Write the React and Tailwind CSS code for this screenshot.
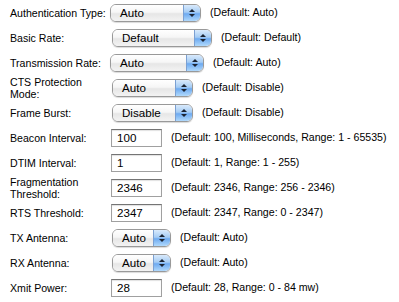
const rows = [
  { label: 'Authentication Type:', kind: 'select', value: 'Auto', w: 'w-[91px]', ml: 'ml-0', note: '(Default: Auto)' },
  { label: 'Basic Rate:', kind: 'select', value: 'Default', w: 'w-[100px]', ml: 'ml-[2px]', note: '(Default: Default)' },
  { label: 'Transmission Rate:', kind: 'select', value: 'Auto', w: 'w-[94px]', ml: 'ml-0', note: '(Default: Auto)' },
  { label: ['CTS Protection', 'Mode:'], kind: 'select', value: 'Auto', w: 'w-[81px]', ml: 'ml-[2px]', note: '(Default: Disable)' },
  { label: 'Frame Burst:', kind: 'select', value: 'Disable', w: 'w-[81px]', ml: 'ml-[2px]', note: '(Default: Disable)' },
  { label: 'Beacon Interval:', kind: 'input', value: '100', note: '(Default: 100, Milliseconds, Range: 1 - 65535)' },
  { label: 'DTIM Interval:', kind: 'input', value: '1', note: '(Default: 1, Range: 1 - 255)' },
  { label: ['Fragmentation', 'Threshold:'], kind: 'input', value: '2346', note: '(Default: 2346, Range: 256 - 2346)' },
  { label: 'RTS Threshold:', kind: 'input', value: '2347', note: '(Default: 2347, Range: 0 - 2347)' },
  { label: 'TX Antenna:', kind: 'select', value: 'Auto', w: 'w-[59px]', ml: 'ml-[2px]', note: '(Default: Auto)' },
  { label: 'RX Antenna:', kind: 'select', value: 'Auto', w: 'w-[59px]', ml: 'ml-[2px]', note: '(Default: Auto)' },
  { label: 'Xmit Power:', kind: 'input', value: '28', note: '(Default: 28, Range: 0 - 84 mw)' },
];

// aqua style popup button
function AquaSelect({ value, w, ml }) {
  return (
    <div className={`${w} ${ml} flex h-[18px] shrink-0 overflow-hidden rounded-[6px] border border-[#999] shadow-[0_1px_1px_rgba(0,0,0,0.15)]`}>
      <div className="flex flex-1 items-center bg-[linear-gradient(#ffffff_0%,#f6f6f6_45%,#e6e6e6_55%,#f3f3f3_100%)] pl-[9px] text-[11.6px] text-black">
        {value}
      </div>
      <div className="flex w-[17px] flex-col items-center justify-center gap-[2px] border-l border-[#7ba0d2] bg-[linear-gradient(#d9eafc_0%,#a5ccf4_45%,#6eaaf0_55%,#b0d9fc_100%)]">
        <span className="h-0 w-0 border-x-[3px] border-b-[3px] border-x-transparent border-b-[#1b2433]" />
        <span className="h-0 w-0 border-x-[3px] border-t-[3px] border-x-transparent border-t-[#1b2433]" />
      </div>
    </div>
  );
}

function TextBox({ value }) {
  return (
    <div className="ml-[1px] flex h-[18px] w-[51px] shrink-0 items-center border border-[#a0a0a0] border-t-[#747474] bg-white pl-[5px] text-[11.6px] text-black shadow-[inset_0_1px_1px_rgba(0,0,0,0.12)]">
      {value}
    </div>
  );
}

export default function App() {
  return (
    <div className="h-[302px] w-[399px] bg-white font-['Liberation_Sans',Arial,sans-serif] text-[10.6px] text-black">
      {rows.map((r, i) => (
        <div key={i} className="flex h-[25px] items-center">
          <div className="w-[110px] shrink-0 pl-[10px] leading-[12px]">
            {Array.isArray(r.label) ? r.label.map((l) => <div key={l}>{l}</div>) : r.label}
          </div>
          {r.kind === 'select' ? <AquaSelect value={r.value} w={r.w} ml={r.ml} /> : <TextBox value={r.value} />}
          <span className="ml-[9px] whitespace-nowrap">{r.note}</span>
        </div>
      ))}
    </div>
  );
}
